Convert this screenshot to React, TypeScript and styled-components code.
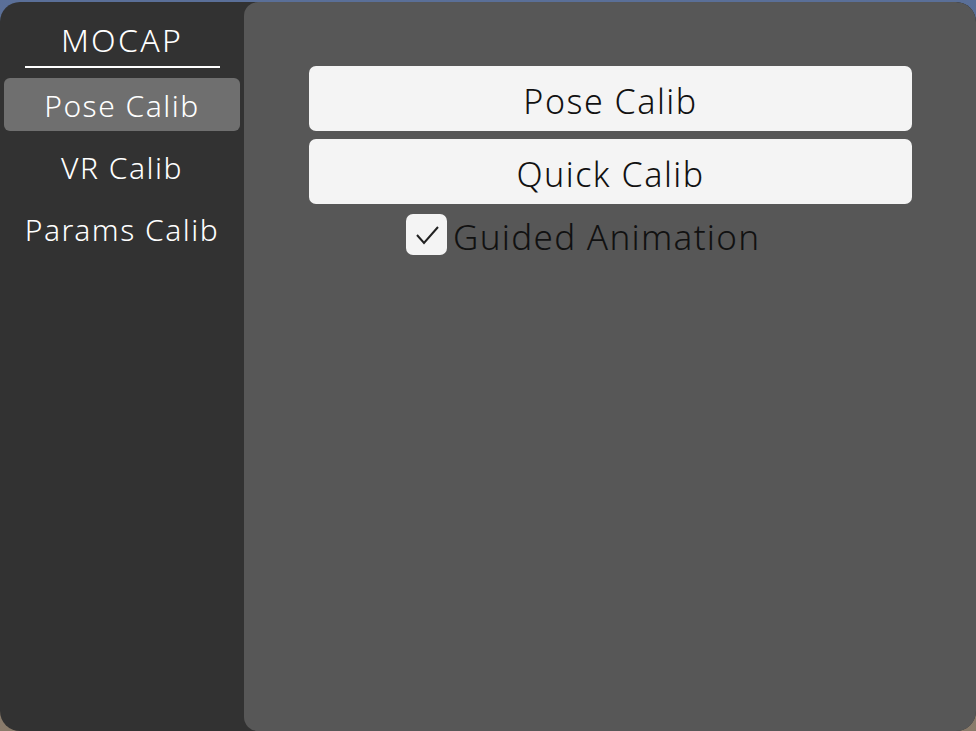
import React from "react";
import styled, { createGlobalStyle } from "styled-components";

const Global = createGlobalStyle`
  html, body { margin: 0; padding: 0; }
  body {
    width: 976px;
    height: 731px;
    overflow: hidden;
    background: linear-gradient(180deg, #5a6f98 0%, #6d7080 50%, #8a7b6a 100%);
    font-family: "Noto Sans", "Open Sans", sans-serif;
  }
`;

const Window = styled.div`
  margin-top: 2px;
  width: 976px;
  height: 729px;
  background: #323232;
  border-radius: 20px;
  display: flex;
  overflow: hidden;
`;

const Sidebar = styled.nav`
  width: 244px;
  flex-shrink: 0;
  display: flex;
  flex-direction: column;
  align-items: center;
  padding-top: 16px;
  box-sizing: border-box;
`;

const Title = styled.div`
  width: 195px;
  text-align: center;
  color: #ffffff;
  font-size: 32px;
  font-weight: 350;
  letter-spacing: 2.3px;
  line-height: 44px;
  padding-bottom: 4px;
  border-bottom: 2px solid #ffffff;
  margin-bottom: 10px;
`;

const NavItem = styled.div<{ $active?: boolean }>`
  width: 236px;
  height: 53px;
  margin-bottom: 9px;
  padding-top: 2px;
  box-sizing: border-box;
  border-radius: 6px;
  background: ${(p) => (p.$active ? "#6f6f6f" : "transparent")};
  color: #ffffff;
  font-size: 30px;
  font-weight: 350;
  letter-spacing: 1.5px;
  display: flex;
  align-items: center;
  justify-content: center;
`;

const Main = styled.main`
  flex: 1;
  background: #575757;
  border-radius: 14px 20px 0 14px;
  padding: 64px 64px 0 65px;
  display: flex;
  flex-direction: column;
  gap: 8px;
`;

const Button = styled.button`
  height: 65px;
  border: none;
  border-radius: 7px;
  background: #f4f4f4;
  color: #111111;
  font-family: "Noto Sans", "Open Sans", sans-serif;
  font-size: 34px;
  font-weight: 350;
  letter-spacing: 1.5px;
  padding: 4px 0 0;
  cursor: pointer;
`;

const CheckRow = styled.label`
  display: flex;
  align-items: center;
  gap: 6px;
  padding-left: 97px;
  margin-top: 2px;
  height: 41px;
`;

const Box = styled.span`
  width: 41px;
  height: 41px;
  border-radius: 7px;
  background: #f4f4f4;
  display: flex;
  align-items: center;
  justify-content: center;
`;

const Label = styled.span`
  font-size: 35px;
  font-weight: 350;
  color: #111111;
  letter-spacing: 1.3px;
  padding-top: 4px;
`;

export default function App() {
  return (
    <>
      <Global />
      <Window>
        <Sidebar>
          <Title>MOCAP</Title>
          <NavItem $active>Pose Calib</NavItem>
          <NavItem>VR Calib</NavItem>
          <NavItem>Params Calib</NavItem>
        </Sidebar>
        <Main>
          <Button>Pose Calib</Button>
          <Button>Quick Calib</Button>
          <CheckRow>
            <Box>
              <svg width="30" height="30" viewBox="0 0 30 30">
                <path d="M5 15 L12 23 L26 7" fill="none" stroke="#222" strokeWidth="2" />
              </svg>
            </Box>
            <Label>Guided Animation</Label>
          </CheckRow>
        </Main>
      </Window>
    </>
  );
}
